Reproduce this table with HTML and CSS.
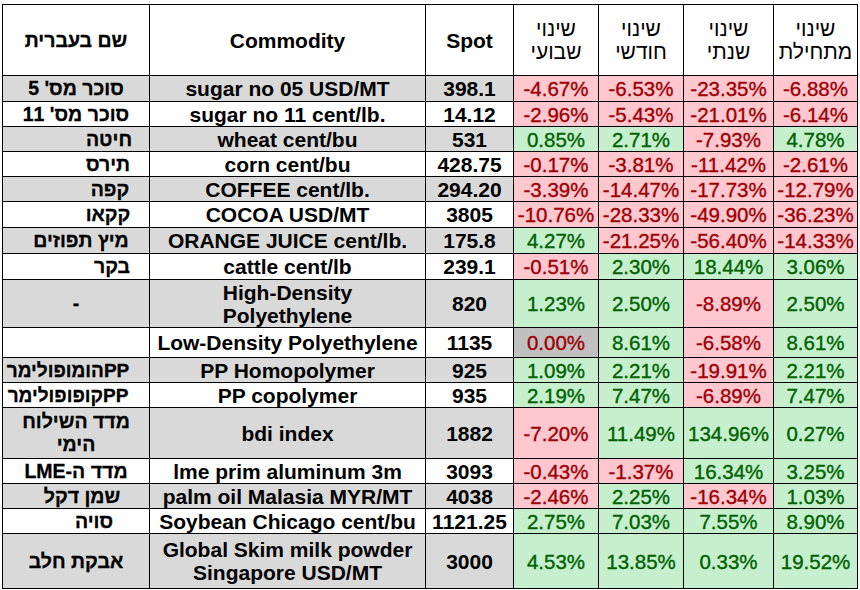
FILE: index.html
```html
<!DOCTYPE html>
<html lang="he">
<head>
<meta charset="utf-8">
<title>Commodities</title>
<link rel="stylesheet" href="styles.css">
</head>
<body>
<table class="grid">
  <colgroup>
    <col class="c-he"><col class="c-com"><col class="c-spot"><col class="c-pct"><col class="c-pct"><col class="c-yr"><col class="c-last">
  </colgroup>
  <tr class="r-head">
    <td class="he" dir="rtl">שם בעברית</td>
    <td class="b">Commodity</td>
    <td class="b">Spot</td>
    <td class="hh" dir="rtl">שינוי<br>שבועי</td>
    <td class="hh" dir="rtl">שינוי<br>חודשי</td>
    <td class="hh" dir="rtl">שינוי<br>שנתי</td>
    <td class="hh" dir="rtl">שינוי<br>מתחילת</td>
  </tr>
  <tr class="r26 alt">
    <td class="he" dir="rtl">סוכר מס' 5</td><td class="com">sugar no 05 USD/MT</td><td class="spot">398.1</td>
    <td class="neg">-4.67%</td><td class="neg">-6.53%</td><td class="neg">-23.35%</td><td class="neg">-6.88%</td>
  </tr>
  <tr class="r25">
    <td class="he" dir="rtl">סוכר מס' 11</td><td class="com">sugar no 11 cent/lb.</td><td class="spot">14.12</td>
    <td class="neg">-2.96%</td><td class="neg">-5.43%</td><td class="neg">-21.01%</td><td class="neg">-6.14%</td>
  </tr>
  <tr class="r25 alt">
    <td class="he off-66" dir="rtl">חיטה</td><td class="com">wheat cent/bu</td><td class="spot">531</td>
    <td class="pos">0.85%</td><td class="pos">2.71%</td><td class="neg">-7.93%</td><td class="pos">4.78%</td>
  </tr>
  <tr class="r25">
    <td class="he off-64" dir="rtl">תירס</td><td class="com">corn cent/bu</td><td class="spot">428.75</td>
    <td class="neg">-0.17%</td><td class="neg">-3.81%</td><td class="neg">-11.42%</td><td class="neg">-2.61%</td>
  </tr>
  <tr class="r25 alt">
    <td class="he off-68" dir="rtl">קפה</td><td class="com">COFFEE cent/lb.</td><td class="spot">294.20</td>
    <td class="neg">-3.39%</td><td class="neg">-14.47%</td><td class="neg">-17.73%</td><td class="neg">-12.79%</td>
  </tr>
  <tr class="r26">
    <td class="he off-64" dir="rtl">קקאו</td><td class="com">COCOA USD/MT</td><td class="spot">3805</td>
    <td class="neg">-10.76%</td><td class="neg">-28.33%</td><td class="neg">-49.90%</td><td class="neg">-36.23%</td>
  </tr>
  <tr class="r26 alt">
    <td class="he off-10" dir="rtl">מיץ תפוזים</td><td class="com">ORANGE JUICE cent/lb.</td><td class="spot">175.8</td>
    <td class="pos">4.27%</td><td class="neg">-21.25%</td><td class="neg">-56.40%</td><td class="neg">-14.33%</td>
  </tr>
  <tr class="r26">
    <td class="he off-72" dir="rtl">בקר</td><td class="com">cattle cent/lb</td><td class="spot">239.1</td>
    <td class="neg">-0.51%</td><td class="pos">2.30%</td><td class="pos">18.44%</td><td class="pos">3.06%</td>
  </tr>
  <tr class="r48 alt">
    <td class="he" dir="rtl">-</td><td class="com">High-Density<br>Polyethylene</td><td class="spot">820</td>
    <td class="pos">1.23%</td><td class="pos">2.50%</td><td class="neg">-8.89%</td><td class="pos">2.50%</td>
  </tr>
  <tr class="r30">
    <td class="he" dir="rtl"></td><td class="com">Low-Density Polyethylene</td><td class="spot">1135</td>
    <td class="zero">0.00%</td><td class="pos">8.61%</td><td class="neg">-6.58%</td><td class="pos">8.61%</td>
  </tr>
  <tr class="r25 alt">
    <td class="he pp off-r16" dir="rtl">PPהומופולימר</td><td class="com">PP Homopolymer</td><td class="spot">925</td>
    <td class="pos">1.09%</td><td class="pos">2.21%</td><td class="neg">-19.91%</td><td class="pos">2.21%</td>
  </tr>
  <tr class="r25">
    <td class="he pp off-r16" dir="rtl">PPקופופולימר</td><td class="com">PP copolymer</td><td class="spot">935</td>
    <td class="pos">2.19%</td><td class="pos">7.47%</td><td class="neg">-6.89%</td><td class="pos">7.47%</td>
  </tr>
  <tr class="r51 alt">
    <td class="he" dir="rtl">מדד השילוח<br>הימי</td><td class="com">bdi index</td><td class="spot">1882</td>
    <td class="neg">-7.20%</td><td class="pos">11.49%</td><td class="pos">134.96%</td><td class="pos">0.27%</td>
  </tr>
  <tr class="r25">
    <td class="he" dir="rtl">מדד ה-LME</td><td class="com">lme prim aluminum 3m</td><td class="spot">3093</td>
    <td class="neg">-0.43%</td><td class="neg">-1.37%</td><td class="pos">16.34%</td><td class="pos">3.25%</td>
  </tr>
  <tr class="r25 alt">
    <td class="he off-12" dir="rtl">שמן דקל</td><td class="com">palm oil Malasia MYR/MT</td><td class="spot">4038</td>
    <td class="neg">-2.46%</td><td class="pos">2.25%</td><td class="neg">-16.34%</td><td class="pos">1.03%</td>
  </tr>
  <tr class="r25">
    <td class="he off-36" dir="rtl">סויה</td><td class="com">Soybean Chicago cent/bu</td><td class="spot">1121.25</td>
    <td class="pos">2.75%</td><td class="pos">7.03%</td><td class="pos">7.55%</td><td class="pos">8.90%</td>
  </tr>
  <tr class="r55 alt">
    <td class="he" dir="rtl">אבקת חלב</td><td class="com">Global Skim milk powder<br>Singapore USD/MT</td><td class="spot">3000</td>
    <td class="pos">4.53%</td><td class="pos">13.85%</td><td class="pos">0.33%</td><td class="pos">19.52%</td>
  </tr>
</table>
</body>
</html>
```

FILE: styles.css
```css
html, body {
  margin: 0;
  padding: 0;
  background: #ffffff;
}

body {
  font-family: "Liberation Sans", Arial, "DejaVu Sans", sans-serif;
  color: #000000;
}

.grid {
  border-collapse: collapse;
  table-layout: fixed;
  width: 856px;
  margin: 4px 0 0 2px;
}

.c-he { width: 147px; }
.c-com { width: 276px; }
.c-spot { width: 88px; }
.c-pct { width: 85px; }
.c-yr { width: 90px; }
.c-last { width: 84px; }

.grid td {
  border: 1px solid #000000;
  padding: 0;
  text-align: center;
  vertical-align: middle;
  font-size: 21px;
  line-height: 23px;
  white-space: nowrap;
  overflow: visible;
}

.b { font-weight: bold; }
.hh { font-weight: normal; }

.com, .spot { font-weight: bold; }

.grid .he {
  font-weight: bold;
  font-size: 19.5px;
  -webkit-text-stroke: 0.3px #000000;
}

.grid .pp {
  font-size: 19px;
}

.alt .he, .alt .com, .alt .spot { background: #d9d9d9; }

.grid .neg, .grid .pos, .grid .zero {
  font-size: 20.5px;
  font-weight: normal;
  -webkit-text-stroke: 0.35px currentColor;
}
.neg { background: #ffc7ce; color: #9c0006; }
.pos { background: #c6efce; color: #006100; }
.zero { background: #c0c0c0; color: #9c0006; }

.r-head td { height: 70px; }
.r25 td { height: 24px; }
.r26 td { height: 25px; }
.r30 td { height: 29px; }
.r48 td { height: 47px; }
.r51 td { height: 50px; }
.r55 td { height: 54px; }

.grid .off-10 { padding-left: 10px; }
.grid .off-12 { padding-left: 12px; }
.grid .off-36 { padding-left: 36px; }
.grid .off-64 { padding-left: 64px; }
.grid .off-66 { padding-left: 66px; }
.grid .off-68 { padding-left: 68px; }
.grid .off-72 { padding-left: 72px; }
.grid .off-r16 { padding-right: 16px; }
```
